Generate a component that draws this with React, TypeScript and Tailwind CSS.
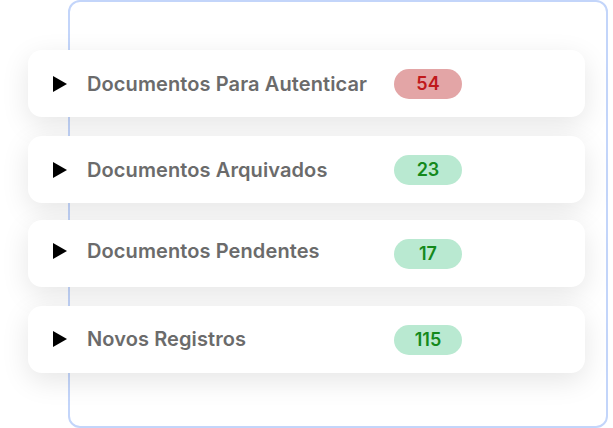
import React from 'react'

type Row = { label: string; count: number; tone: 'red' | 'green'; mt: string; pb: string }

const rows: Row[] = [
  { label: 'Documentos Para Autenticar', count: 54, tone: 'red', mt: 'mt-0', pb: 'pb-0' },
  { label: 'Documentos Arquivados', count: 23, tone: 'green', mt: 'mt-[19px]', pb: 'pb-0' },
  { label: 'Documentos Pendentes', count: 17, tone: 'green', mt: 'mt-[17px]', pb: 'pb-[6px]' },
  { label: 'Novos Registros', count: 115, tone: 'green', mt: 'mt-[19px]', pb: 'pb-[2px]' },
]

function Triangle() {
  return (
    <svg width="14" height="16" viewBox="0 0 14 16" className="shrink-0">
      <path d="M0 0 L14 8 L0 16 Z" fill="#000" />
    </svg>
  )
}

export default function App() {
  return (
    <div className="w-[613px] h-[428px] bg-white overflow-hidden font-[Inter,sans-serif]">
      <div className="ml-[68px] mt-0 w-[540px] h-[428px] rounded-[12px] border-2 border-[#c3d5fa] pt-[48px]">
        <div className="-ml-[42px] w-[557px] flex flex-col">
          {rows.map(r => (
            <div
              key={r.label}
              className={`${r.mt} h-[67px] bg-white rounded-[14px] shadow-[0_8px_28px_rgba(0,0,0,0.10)] flex items-center pl-[25px]`}
            >
              <div className={`flex items-center ${r.pb}`}>
                <Triangle />
                <span className="ml-[20px] w-[307px] text-[20px] leading-[24px] font-semibold tracking-[0.1px] text-[#6b6b6b]">
                  {r.label}
                </span>
              </div>
              <span
                className={`w-[68px] h-[30px] rounded-full flex items-center justify-center text-[18px] font-semibold ${
                  r.tone === 'red' ? 'bg-[#e3a5a6] text-[#c0191b]' : 'bg-[#b9e9d1] text-[#14891c]'
                }`}
              >
                {r.count}
              </span>
            </div>
          ))}
        </div>
      </div>
    </div>
  )
}
